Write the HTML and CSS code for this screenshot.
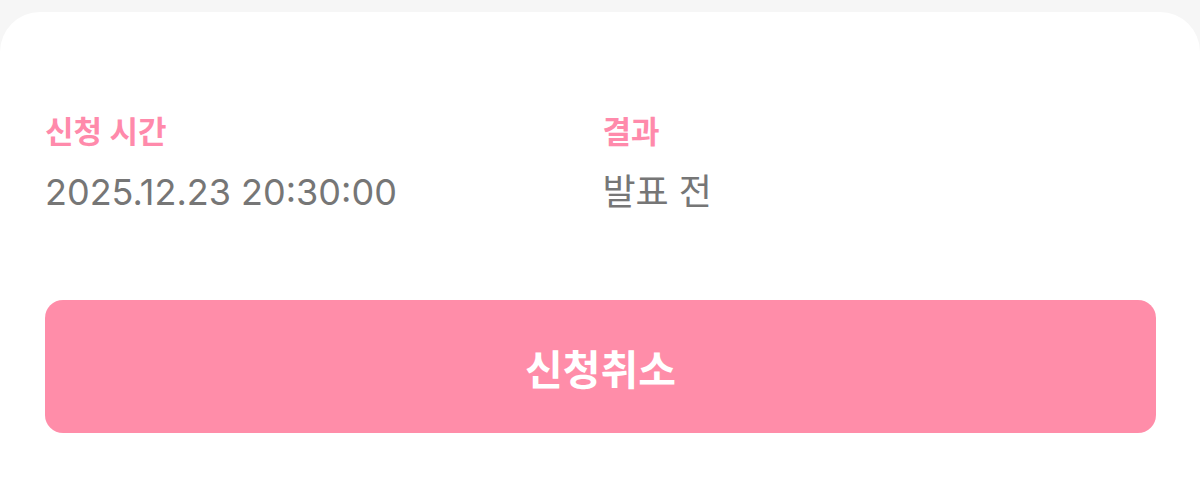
FILE: index.html
```html
<!DOCTYPE html>
<html lang="ko">
<head>
  <meta charset="UTF-8">
  <title>신청 내역</title>
  <meta name="viewport" content="width=device-width, initial-scale=1.0">
  <link rel="stylesheet" href="styles.css">
</head>
<body>
  <div class="sheet">
    <div class="info">
      <div class="info-item">
        <p class="info-label">신청 시간</p>
        <p class="info-value">2025.12.23 20:30:00</p>
      </div>
      <div class="info-item">
        <p class="info-label">결과</p>
        <p class="info-value">발표 전</p>
      </div>
    </div>
    <button class="cancel-button" type="button">신청취소</button>
  </div>
</body>
</html>
```

FILE: styles.css
```css
html, body {
  margin: 0;
  padding: 0;
}
body {
  background: #f6f6f6;
  padding-top: 12px;
  font-family: Inter, "Noto Sans CJK KR", sans-serif;
}
.sheet {
  background: #fff;
  border-radius: 40px 40px 0 0;
  padding: 103px 44px 80px 45px;
}
.info {
  display: grid;
  grid-template-columns: 1fr 1fr;
  column-gap: 4px;
}
.info-label {
  margin: 0;
  font-size: 31px;
  line-height: 34px;
  font-weight: 700;
  color: #ff8aab;
}
.info-value {
  margin: 21px 0 0;
  font-size: 36px;
  line-height: 44px;
  color: #767676;
}
.cancel-button {
  display: block;
  width: 100%;
  height: 133px;
  margin-top: 86px;
  border: none;
  border-radius: 18px;
  background: #ff8da9;
  color: #fff;
  font-family: inherit;
  font-size: 41px;
  font-weight: 700;
  cursor: pointer;
}
```
